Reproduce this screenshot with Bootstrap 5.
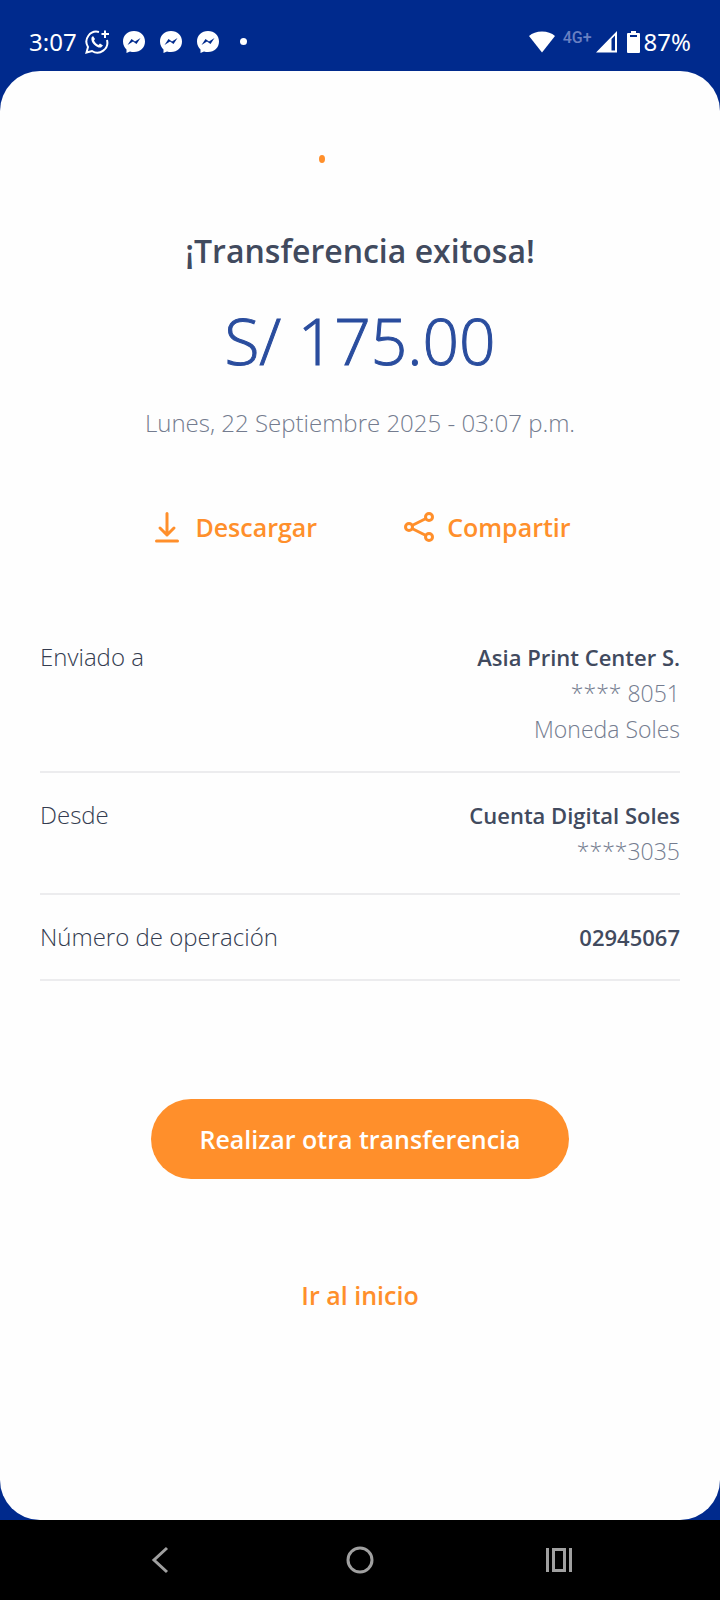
<!DOCTYPE html>
<html lang="es">
<head>
<meta charset="utf-8">
<meta name="viewport" content="width=device-width, initial-scale=1">
<title>Transferencia exitosa</title>
<link href="https://cdn.jsdelivr.net/npm/bootstrap@5.3.0/dist/css/bootstrap.min.css" rel="stylesheet">
<style>
  :root { --brand: #002a8d; --accent: #ff8f2b; --ink: #414a5e; --muted: #747c8f; }
  body { background: var(--brand); color: var(--ink); font-family: "Open Sans", sans-serif; font-size: 24px; line-height: 36px; }
  svg { display: block; flex: none; }
  .status { height: 71px; padding: 12px 29px 0; color: #fff; font-family: "Noto Sans", sans-serif; line-height: 36px; }
  .status-icons { gap: 13px; margin-left: 8px; }
  .status-dot { width: 7px; height: 7px; margin-left: 7px; background: #fff; }
  .network { color: #6a80c2; font-family: Roboto, sans-serif; font-size: 16px; font-weight: 500; line-height: 24px; padding-bottom: 8px; }
  .battery { margin: 0 4px 0 10px; }
  .sheet { background: #fefefe; border-radius: 40px; padding: 84px 40px 40px; }
  .spark { width: 6px; height: 8px; background: var(--accent); margin-right: 76px; }
  .title { font-size: 32px; line-height: 40px; font-weight: 600; margin: 68px 0 34px; }
  .amount { color: #2a4d9e; font-size: 64px; line-height: 72px; font-weight: 300; -webkit-text-stroke: 1px #2a4d9e; margin-bottom: 28px; }
  .soft { color: var(--muted); font-weight: 300; }
  .detail .soft { font-size: 23px; }
  .actions { gap: 86px; margin: 66px 0 68px; padding-left: 6px; }
  .link-btn { color: var(--accent); font-size: 25px; line-height: 40px; font-weight: 600; }
  .link-btn:hover { color: #e07412; }
  .download-btn { gap: 16px; }
  .share-btn { gap: 12px; }
  .detail { padding: 24px 0; border-bottom: 2px solid #ececee; }
  .detail dt { color: #343c50; font-weight: 300; }
  .detail dd { font-size: 22px; font-weight: 600; }
  .main-btn { background: var(--accent); color: #fff; font-size: 25px; line-height: 40px; font-weight: 600; padding: 20px 48px; margin: 118px 0 96px; }
  .main-btn:hover { background: #e07412; color: #fff; }
  .sysnav { height: 80px; padding: 0 60px; background: #000; color: #a0a0a0; }
</style>
</head>
<body>
<div class="d-flex flex-column min-vh-100">
  <header class="status d-flex justify-content-between">
    <div class="d-flex align-items-center">
      <span>3:07</span>
      <div class="status-icons d-flex align-items-center">
        <svg width="24" height="24" viewBox="0 0 24 24" fill="none" stroke="#fff" stroke-width="2" role="img" aria-label="WhatsApp">
          <path d="M14 2A10 10 0 0 0 3 17L1.500 22.500L7 21A10 10 0 0 0 22 10M20 .5V8M16.500 4H24"/>
          <path d="M8 6L6.500 7.500C6 10 7 12.500 9 14.500C11.200 16.800 14 18 16 17.500L18 15.500L15 13.500L13.500 15C11.500 14 10 12.500 9 10.500L10 9Z" fill="#fff" stroke="none"/>
        </svg>
        <svg width="24" height="24" viewBox="0 0 24 24" role="img" aria-label="Messenger"><path id="chat" fill="#fff" fill-rule="evenodd" d="M12 1C5.500 1 1 5.500 1 11.500C1 15 2.500 17.500 4.500 19.500V23L8 21.500C9.300 21.900 10.600 22 12 22C18.500 22 23 17.500 23 11.500S18.500 1 12 1ZM5.500 15L9.500 9L13 11.500L18.500 8L14.500 14L11 11.500Z"/></svg>
        <svg width="24" height="24" viewBox="0 0 24 24" role="img" aria-label="Messenger"><use href="#chat"/></svg>
        <svg width="24" height="24" viewBox="0 0 24 24" role="img" aria-label="Messenger"><use href="#chat"/></svg>
        <span class="status-dot rounded-circle"></span>
      </div>
    </div>
    <div class="d-flex align-items-center">
      <svg width="26" height="22" viewBox="0 0 26 22" class="me-2" role="img" aria-label="Wi-Fi"><path fill="#fff" d="M0 5Q5 .5 13 .5T26 5L13 21.500Z"/></svg>
      <span class="network me-1">4G+</span>
      <svg width="21" height="22" viewBox="0 0 21 22" role="img" aria-label="Señal"><path fill="#fff" fill-rule="evenodd" d="M21 0V21.500H0ZM15.500 8V19.500H19V4.500Z"/></svg>
      <svg width="13" height="22" viewBox="0 0 13 22" class="battery" role="img" aria-label="Batería"><path fill="#fff" fill-rule="evenodd" d="M4 0H9V2H12Q13 2 13 3V21Q13 22 12 22H1Q0 22 0 21V3Q0 2 1 2H4ZM3 4V6H10V4Z"/></svg>
      <span>87%</span>
    </div>
  </header>

  <main class="sheet flex-grow-1 d-flex flex-column align-items-center text-center">
    <span class="spark rounded-circle"></span>
    <h1 class="title">¡Transferencia exitosa!</h1>
    <p class="amount">S/ 175.00</p>
    <p class="soft mb-0">Lunes, 22 Septiembre 2025 - 03:07 p.m.</p>

    <div class="actions d-flex justify-content-center">
      <button type="button" class="link-btn download-btn btn border-0 p-0 d-flex align-items-center">
        <svg width="24" height="32" viewBox="0 0 24 32" fill="none" stroke="currentColor" stroke-width="3" stroke-linecap="round" stroke-linejoin="round" aria-hidden="true"><path d="M12 2.500V24M5 17L12 24L19 17M1.500 30H22.500"/></svg>
        Descargar
      </button>
      <button type="button" class="link-btn share-btn btn border-0 p-0 d-flex align-items-center">
        <svg width="32" height="32" viewBox="0 0 32 32" fill="none" stroke="currentColor" stroke-width="3" aria-hidden="true"><circle cx="6" cy="16" r="3.500"/><circle cx="26" cy="6" r="3.500"/><circle cx="26" cy="26" r="3.500"/><path d="M9 14.500L23 7.500M9 17.500L23 24.500"/></svg>
        Compartir
      </button>
    </div>

    <dl class="w-100 mb-0">
      <div class="detail d-flex justify-content-between">
        <dt>Enviado a</dt>
        <dd class="mb-0 text-end">Asia Print Center S.<span class="soft d-block">**** 8051</span><span class="soft d-block">Moneda Soles</span></dd>
      </div>
      <div class="detail d-flex justify-content-between">
        <dt>Desde</dt>
        <dd class="mb-0 text-end">Cuenta Digital Soles<span class="soft d-block">****3035</span></dd>
      </div>
      <div class="detail d-flex justify-content-between">
        <dt>Número de operación</dt>
        <dd class="mb-0 text-end">02945067</dd>
      </div>
    </dl>

    <button type="button" class="main-btn btn border-0 rounded-pill">Realizar otra transferencia</button>
    <a href="#" class="link-btn text-decoration-none">Ir al inicio</a>
  </main>

  <nav class="sysnav d-flex" aria-label="Sistema">
    <button type="button" class="btn border-0 rounded-0 p-0 flex-fill d-flex align-items-center justify-content-center text-reset" aria-label="Atrás"><svg width="28" height="28" viewBox="0 0 28 28" fill="none" stroke="currentColor" stroke-width="3"><path d="M21 2L8 14L21 26"/></svg></button>
    <button type="button" class="btn border-0 rounded-0 p-0 flex-fill d-flex align-items-center justify-content-center text-reset" aria-label="Inicio"><svg width="28" height="28" viewBox="0 0 28 28" fill="none" stroke="currentColor" stroke-width="3"><circle cx="14" cy="14" r="12"/></svg></button>
    <button type="button" class="btn border-0 rounded-0 p-0 flex-fill d-flex align-items-center justify-content-center text-reset" aria-label="Recientes"><svg width="28" height="28" viewBox="0 0 28 28" fill="none" stroke="currentColor" stroke-width="3"><path d="M1.500 2V26M24.500 2V26" stroke-width="3"/><path d="M7.500 3.500H18.500V24.500H7.500Z"/></svg></button>
  </nav>
</div>
<script src="https://cdn.jsdelivr.net/npm/bootstrap@5.3.0/dist/js/bootstrap.bundle.min.js"></script>
</body>
</html>
